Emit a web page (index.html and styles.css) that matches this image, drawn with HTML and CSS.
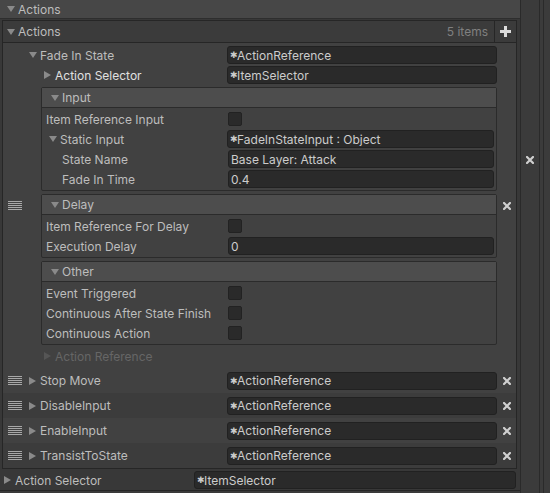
FILE: index.html
```html
<!DOCTYPE html>
<html lang="en">

<head>
    <meta charset="UTF-8">
    <meta name="viewport" content="width=device-width, initial-scale=1.0">
    <title>Inspector - Actions</title>
    <link rel="stylesheet" href="styles.css">
</head>

<body>
    <div class="window">
        <div class="main">
            <!-- Section header -->
            <div class="section-header"><span class="arrow down"></span>Actions</div>

            <!-- Reorderable list -->
            <div class="list">
                <div class="list-header">
                    <div class="list-title"><span class="arrow down"></span>Actions</div>
                    <div class="list-count">5 items</div>
                    <div class="list-add">
                        <svg width="11" height="11" viewBox="0 0 11 11"><rect x="4" y="0" width="3" height="11" fill="#dcdcdc"/><rect x="0" y="4" width="11" height="3" fill="#dcdcdc"/></svg>
                    </div>
                </div>

                <!-- Element 0 (expanded) -->
                <div class="element">
                    <div class="handle">
                        <svg width="14" height="9" viewBox="0 0 14 9"><path d="M0 0.5H14M0 2.5H14M0 4.5H14M0 6.5H14M0 8.5H14" stroke="#a8a8a8" stroke-width="1"/></svg>
                    </div>
                    <div class="element-body">
                        <div class="row">
                            <div class="label lvl1"><span class="arrow down"></span>Fade In State</div>
                            <div class="field"><span class="star">✱</span>ActionReference</div>
                        </div>
                        <div class="row">
                            <div class="label lvl2 bright"><span class="arrow right"></span>Action Selector</div>
                            <div class="field"><span class="star">✱</span>ItemSelector</div>
                        </div>

                        <div class="box">
                            <div class="box-header"><span class="arrow down"></span>Input</div>
                            <div class="box-body">
                                <div class="row">
                                    <div class="label box-label">Item Reference Input</div>
                                    <div class="checkbox"></div>
                                </div>
                                <div class="row">
                                    <div class="label box-label fold"><span class="arrow down"></span>Static Input</div>
                                    <div class="field"><span class="star">✱</span>FadeInStateInput : Object</div>
                                </div>
                                <div class="row">
                                    <div class="label box-label sub">State Name</div>
                                    <div class="field sub-field">Base Layer: Attack</div>
                                </div>
                                <div class="row">
                                    <div class="label box-label sub">Fade In Time</div>
                                    <div class="field sub-field">0.4</div>
                                </div>
                            </div>
                        </div>

                        <div class="box">
                            <div class="box-header"><span class="arrow down"></span>Delay</div>
                            <div class="box-body">
                                <div class="row">
                                    <div class="label box-label">Item Reference For Delay</div>
                                    <div class="checkbox"></div>
                                </div>
                                <div class="row">
                                    <div class="label box-label">Execution Delay</div>
                                    <div class="field sub-field">0</div>
                                </div>
                            </div>
                        </div>

                        <div class="box">
                            <div class="box-header"><span class="arrow down"></span>Other</div>
                            <div class="box-body">
                                <div class="row">
                                    <div class="label box-label">Event Triggered</div>
                                    <div class="checkbox"></div>
                                </div>
                                <div class="row">
                                    <div class="label box-label">Continuous After State Finish</div>
                                    <div class="checkbox"></div>
                                </div>
                                <div class="row">
                                    <div class="label box-label">Continuous Action</div>
                                    <div class="checkbox"></div>
                                </div>
                            </div>
                        </div>

                        <div class="row last-row">
                            <div class="label lvl2 disabled"><span class="arrow right"></span>Action Reference</div>
                        </div>
                    </div>
                    <div class="remove">
                        <svg width="8" height="8" viewBox="0 0 8 8"><path d="M1 1L7 7M7 1L1 7" stroke="#cfcfcf" stroke-width="2.2" stroke-linecap="square"/></svg>
                    </div>
                </div>

                <!-- Collapsed elements -->
                <div class="element compact alt">
                    <div class="handle">
                        <svg width="14" height="9" viewBox="0 0 14 9"><path d="M0 0.5H14M0 2.5H14M0 4.5H14M0 6.5H14M0 8.5H14" stroke="#a8a8a8" stroke-width="1"/></svg>
                    </div>
                    <div class="element-body">
                        <div class="row">
                            <div class="label lvl1"><span class="arrow right"></span>Stop Move</div>
                            <div class="field"><span class="star">✱</span>ActionReference</div>
                        </div>
                    </div>
                    <div class="remove">
                        <svg width="8" height="8" viewBox="0 0 8 8"><path d="M1 1L7 7M7 1L1 7" stroke="#cfcfcf" stroke-width="2.2" stroke-linecap="square"/></svg>
                    </div>
                </div>
                <div class="element compact">
                    <div class="handle">
                        <svg width="14" height="9" viewBox="0 0 14 9"><path d="M0 0.5H14M0 2.5H14M0 4.5H14M0 6.5H14M0 8.5H14" stroke="#a8a8a8" stroke-width="1"/></svg>
                    </div>
                    <div class="element-body">
                        <div class="row">
                            <div class="label lvl1"><span class="arrow right"></span>DisableInput</div>
                            <div class="field"><span class="star">✱</span>ActionReference</div>
                        </div>
                    </div>
                    <div class="remove">
                        <svg width="8" height="8" viewBox="0 0 8 8"><path d="M1 1L7 7M7 1L1 7" stroke="#cfcfcf" stroke-width="2.2" stroke-linecap="square"/></svg>
                    </div>
                </div>
                <div class="element compact alt">
                    <div class="handle">
                        <svg width="14" height="9" viewBox="0 0 14 9"><path d="M0 0.5H14M0 2.5H14M0 4.5H14M0 6.5H14M0 8.5H14" stroke="#a8a8a8" stroke-width="1"/></svg>
                    </div>
                    <div class="element-body">
                        <div class="row">
                            <div class="label lvl1"><span class="arrow right"></span>EnableInput</div>
                            <div class="field"><span class="star">✱</span>ActionReference</div>
                        </div>
                    </div>
                    <div class="remove">
                        <svg width="8" height="8" viewBox="0 0 8 8"><path d="M1 1L7 7M7 1L1 7" stroke="#cfcfcf" stroke-width="2.2" stroke-linecap="square"/></svg>
                    </div>
                </div>
                <div class="element compact">
                    <div class="handle">
                        <svg width="14" height="9" viewBox="0 0 14 9"><path d="M0 0.5H14M0 2.5H14M0 4.5H14M0 6.5H14M0 8.5H14" stroke="#a8a8a8" stroke-width="1"/></svg>
                    </div>
                    <div class="element-body">
                        <div class="row">
                            <div class="label lvl1"><span class="arrow right"></span>TransistToState</div>
                            <div class="field"><span class="star">✱</span>ActionReference</div>
                        </div>
                    </div>
                    <div class="remove">
                        <svg width="8" height="8" viewBox="0 0 8 8"><path d="M1 1L7 7M7 1L1 7" stroke="#cfcfcf" stroke-width="2.2" stroke-linecap="square"/></svg>
                    </div>
                </div>
            </div>

            <!-- Property below the list -->
            <div class="row bottom-row">
                <div class="label bottom-label"><span class="arrow right"></span>Action Selector</div>
                <div class="field"><span class="star">✱</span>ItemSelector</div>
            </div>
            <div class="footer"></div>
        </div>

        <!-- Right side strip -->
        <div class="side">
            <div class="side-pane">
                <svg width="8" height="8" viewBox="0 0 8 8"><path d="M1 1L7 7M7 1L1 7" stroke="#cfcfcf" stroke-width="2.2" stroke-linecap="square"/></svg>
            </div>
            <div class="side-gap"></div>
            <div class="side-rest"></div>
        </div>
    </div>
</body>

</html>
```

FILE: styles.css
```css
* {
    margin: 0;
    padding: 0;
    box-sizing: border-box;
}

body {
    background: #383838;
    color: #bdbdbd;
    font-family: Inter, 'Noto Sans', sans-serif;
    font-size: 12px;
    width: 550px;
    height: 493px;
    overflow: hidden;
}

.window {
    display: flex;
    height: 493px;
}

.main {
    width: 520px;
}

/* foldout arrows */
.arrow {
    display: inline-block;
    width: 0;
    height: 0;
    margin-right: 4px;
    flex-shrink: 0;
}

.arrow.down {
    border-left: 4px solid transparent;
    border-right: 4px solid transparent;
    border-top: 6px solid #8a8a8a;
    margin-right: 3px;
}

.arrow.right {
    border-top: 4px solid transparent;
    border-bottom: 4px solid transparent;
    border-left: 7px solid #8a8a8a;
}

.section-header {
    height: 19px;
    background: #474747;
    border-bottom: 1px solid #2e2e2e;
    display: flex;
    align-items: center;
    padding-left: 7px;
}

/* list */
.list {
    margin: 1px 0 0 2px;
    width: 515px;
    border: 1px solid #262626;
    background: #414141;
}

.list-header {
    display: flex;
    align-items: center;
    height: 22px;
    background: #3b3b3b;
    border-bottom: 1px solid #262626;
}

.list-title {
    flex: 1;
    display: flex;
    align-items: center;
    padding-left: 4px;
}

.list-count {
    color: #808080;
    padding-right: 6px;
}

.list-add {
    width: 22px;
    height: 21px;
    border-left: 1px solid #262626;
    display: flex;
    align-items: center;
    justify-content: center;
}

.element {
    display: flex;
}

.element.compact {
    height: 25px;
    background: #3c3c3c;
}

.element.compact.alt {
    background: #414141;
}

.handle {
    width: 25px;
    display: flex;
    align-items: center;
    padding-left: 5px;
}

.element-body {
    width: 469px;
    padding: 2px 0;
}

.compact .element-body {
    display: flex;
    align-items: center;
    padding: 0;
}

.compact .row {
    width: 100%;
}

.remove {
    width: 19px;
    display: flex;
    align-items: center;
    justify-content: center;
}

/* rows and fields */
.row {
    display: flex;
    align-items: center;
    height: 20px;
}

.label {
    width: 199px;
    flex-shrink: 0;
    display: flex;
    align-items: center;
    white-space: nowrap;
}

.label.lvl1 {
    padding-left: 1px;
}

.label.lvl2 {
    padding-left: 16px;
}

.bright {
    color: #e0e0e0;
}

.disabled {
    color: #666666;
}

.disabled .arrow.right {
    border-left-color: #555555;
}

.field {
    flex: 1;
    height: 18px;
    background: #2a2a2a;
    border: 1px solid #212121;
    border-radius: 3px;
    padding-left: 2px;
    display: flex;
    align-items: center;
    color: #cccccc;
    white-space: nowrap;
    overflow: hidden;
}

.sub-field {
    margin-left: 1px;
}

.star {
    font-family: 'DejaVu Sans', sans-serif;
    font-size: 9px;
    width: 7px;
    margin-right: 0;
}

.checkbox {
    width: 14px;
    height: 14px;
    margin-left: 1px;
    background: #2a2a2a;
    border: 1px solid #222222;
    border-radius: 2px;
}

/* grouped boxes */
.box {
    margin: 2px 0 3px 13px;
    border: 1px solid #2b2b2b;
    border-radius: 2px;
    background: #414141;
}

.box + .box {
    margin-top: 0;
}

.box-header {
    height: 20px;
    background: #4d4d4d;
    border-bottom: 1px solid #2b2b2b;
    display: flex;
    align-items: center;
    padding-left: 9px;
}

.box-body {
    padding: 1px 2px 1px 4px;
}

.box-label {
    width: 181px;
}

.box-label.fold {
    padding-left: 3px;
}

.box-label.sub {
    padding-left: 16px;
}

.last-row {
    margin-top: -2px;
}

/* property under list */
.bottom-row {
    margin-top: 1px;
    width: 516px;
}

.bottom-label {
    width: 194px;
    padding-left: 4px;
}

.footer {
    border-top: 1px solid #262626;
    height: 4px;
    background: #3a3a3a;
}

/* side strip */
.side {
    flex: 1;
    display: flex;
}

.side-pane {
    width: 19px;
    border-left: 1px solid #2a2a2a;
    background: #3b3b3b;
    display: flex;
    justify-content: center;
    padding-top: 156px;
}

.side-gap {
    width: 4px;
    border-left: 1px solid #2a2a2a;
    background: #3b3b3b;
}

.side-rest {
    flex: 1;
    border-left: 1px solid #2a2a2a;
    background: #3b3b3b;
}
```
